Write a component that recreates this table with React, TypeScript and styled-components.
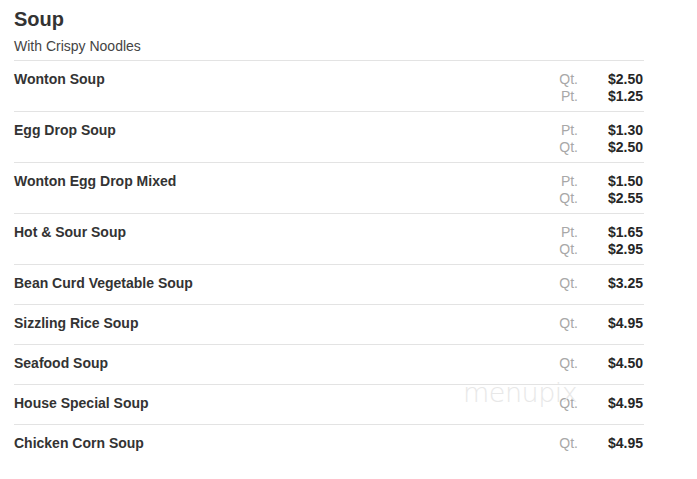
import React from "react";
import styled, { createGlobalStyle } from "styled-components";

const Global = createGlobalStyle`
  html, body { margin: 0; padding: 0; background: #fff; }
  body { font-family: "Liberation Sans", Arial, sans-serif; }
`;

const Page = styled.div`
  position: relative;
  padding: 7px 0 0 14px;
  width: 630px;
`;

const Title = styled.h2`
  margin: 0;
  font-size: 20px;
  line-height: 24px;
  font-weight: bold;
  color: #333;
`;

const Subtitle = styled.div`
  margin-top: 7px;
  font-size: 14px;
  line-height: 17px;
  color: #444;
  padding-bottom: 5px;
`;

const Row = styled.div`
  display: grid;
  grid-template-columns: 1fr 64px 66px;
  border-top: 1px solid #e3e3e3;
  padding: 10px 0 6px;
`;

const Name = styled.div`
  font-size: 14px;
  line-height: 17px;
  font-weight: bold;
  color: #333;
  margin-bottom: 6px;
`;

const Sizes = styled.div`
  display: flex;
  flex-direction: column;
  align-items: flex-end;
  font-size: 14px;
  line-height: 17px;
  color: #a8a8a8;
`;

const Prices = styled.div`
  display: flex;
  flex-direction: column;
  align-items: flex-end;
  font-size: 14px;
  line-height: 17px;
  font-weight: bold;
  color: #262626;
  padding-right: 1px;
`;

const Watermark = styled.div`
  position: absolute;
  left: 463px;
  top: 377px;
  font-family: "DejaVu Sans", sans-serif;
  font-weight: 200;
  font-size: 27px;
  letter-spacing: -0.5px;
  color: #e8e8e8;
  pointer-events: none;
`;

type Item = { name: string; prices: [string, string][] };

const items: Item[] = [
  { name: "Wonton Soup", prices: [["Qt.", "$2.50"], ["Pt.", "$1.25"]] },
  { name: "Egg Drop Soup", prices: [["Pt.", "$1.30"], ["Qt.", "$2.50"]] },
  { name: "Wonton Egg Drop Mixed", prices: [["Pt.", "$1.50"], ["Qt.", "$2.55"]] },
  { name: "Hot & Sour Soup", prices: [["Pt.", "$1.65"], ["Qt.", "$2.95"]] },
  { name: "Bean Curd Vegetable Soup", prices: [["Qt.", "$3.25"]] },
  { name: "Sizzling Rice Soup", prices: [["Qt.", "$4.95"]] },
  { name: "Seafood Soup", prices: [["Qt.", "$4.50"]] },
  { name: "House Special Soup", prices: [["Qt.", "$4.95"]] },
  { name: "Chicken Corn Soup", prices: [["Qt.", "$4.95"]] },
];

export default function App() {
  return (
    <Page>
      <Global />
      <Title>Soup</Title>
      <Subtitle>With Crispy Noodles</Subtitle>
      {items.map((it) => (
        <Row key={it.name}>
          <Name>{it.name}</Name>
          <Sizes>
            {it.prices.map(([s]) => (
              <span key={s}>{s}</span>
            ))}
          </Sizes>
          <Prices>
            {it.prices.map(([s, p]) => (
              <span key={s}>{p}</span>
            ))}
          </Prices>
        </Row>
      ))}
      <Watermark>menupix</Watermark>
    </Page>
  );
}
